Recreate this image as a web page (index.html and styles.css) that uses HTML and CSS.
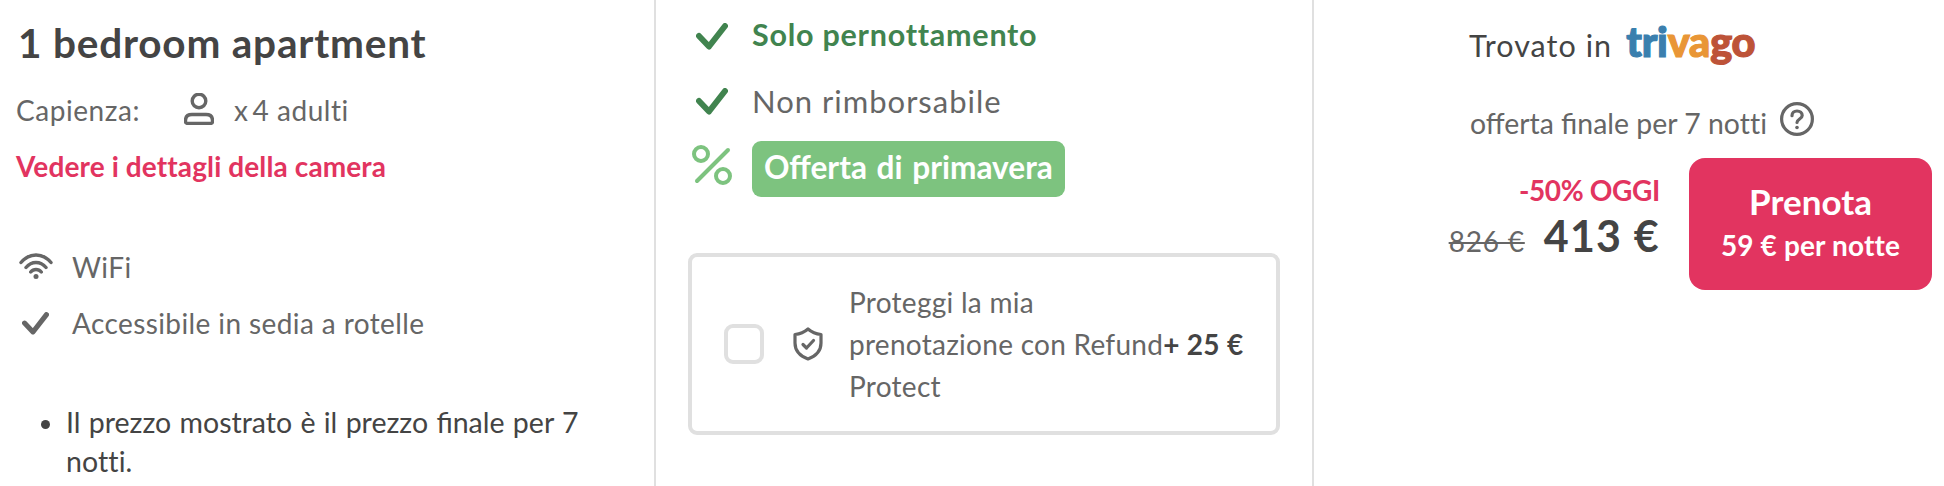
FILE: index.html
```html
<!DOCTYPE html>
<html lang="it">
<head>
<meta charset="utf-8">
<title>1 bedroom apartment</title>
<link rel="stylesheet" href="styles.css">
</head>
<body>
<main class="offer">
  <section class="room">
    <h2 class="room-title">1 bedroom apartment</h2>
    <div class="capacity">
      <span>Capienza:</span>
      <svg class="person" viewBox="0 0 30 32"><circle cx="15" cy="8" r="6.8"/><path d="M1.5 27.500C1.500 23.500 4 21.500 8 21.500H22C26 21.500 28.500 23.500 28.500 27.500V28.500C28.500 29.700 27.800 30.400 26.500 30.400H3.500C2.200 30.400 1.500 29.700 1.500 28.500Z"/></svg>
      <span class="times">x</span><span>4 adulti</span>
    </div>
    <a class="details">Vedere i dettagli della camera</a>
    <div class="amenity wifi-row">
      <svg class="wifi" viewBox="0 0 34 28"><path d="M2 10.500C10.500 .500 23.500 .500 32 10.500M7 15.500C12.500 8.800 21.500 8.800 27 15.500M11.700 20C14.500 16.600 19.500 16.600 22.300 20"/><circle cx="17" cy="24.500" r="2.500"/></svg>
      <span>WiFi</span>
    </div>
    <div class="amenity">
      <svg class="tick grey" viewBox="0 0 32 27"><path d="M3 13L13 23.500L29 3"/></svg>
      <span>Accessibile in sedia a rotelle</span>
    </div>
    <ul class="notes"><li>Il prezzo mostrato è il prezzo finale per 7<br><span class="unjoined">notti.</span></li></ul>
  </section>

  <section class="terms">
    <div class="term"><svg class="tick" viewBox="0 0 32 27"><path d="M3 13L13 23.500L29 3"/></svg><span class="term-strong">Solo pernottamento</span></div>
    <div class="term second"><svg class="tick" viewBox="0 0 32 27"><path d="M3 13L13 23.500L29 3"/></svg><span class="term-plain">Non rimborsabile</span></div>
    <div class="term promo">
      <svg class="percent" viewBox="0 0 40 40"><circle cx="9" cy="9" r="7"/><circle cx="31" cy="31" r="7"/><path d="M36 5L5 36"/></svg>
      <span class="pill">Offerta di primavera</span>
    </div>
    <div class="protect">
      <span class="checkbox"></span>
      <svg class="shield" viewBox="0 0 30 34"><path d="M15 2C11.500 5 6.500 7 2 7.500V16C2 23.500 7 29 15 32C23 29 28 23.500 28 16V7.500C23.500 7 18.500 5 15 2Z"/><path d="M10 17.500L13.500 21L20.500 13.500"/></svg>
      <span class="protect-text">Proteggi la mia<br>prenotazione con Refund<br>Protect</span>
      <strong class="protect-price">+ 25 €</strong>
    </div>
  </section>

  <section class="deal">
    <div class="found"><span class="found-label">Trovato in</span><span class="brand"><span class="brand-blue">tri</span><span class="brand-orange">va</span><span class="brand-red">go</span></span></div>
    <div class="final"><span>offerta finale per 7 <span class="unjoined">notti</span></span><svg class="help" viewBox="0 0 34 34"><circle cx="17" cy="17" r="15.400"/><path d="M12 13.700C12 10.700 14.200 9 17 9C20 9 22.200 10.900 22.200 13.500C22.200 17 17 17 17 20.500"/><circle class="dot" cx="17" cy="25.500" r="1.800"/></svg></div>
    <div class="book">
      <div class="prices">
        <div class="discount">-50% OGGI</div>
        <div class="amounts"><s class="old">826 €</s><strong class="now">413 €</strong></div>
      </div>
      <button class="cta"><span class="cta-main">Prenota</span><span class="cta-sub">59 € per notte</span></button>
    </div>
  </section>
</main>
</body>
</html>
```
FILE: styles.css
```css
* { box-sizing: border-box; }
body { margin: 0; background: #fff; color: #666; font: 28px/40px Lato, "Open Sans", sans-serif; }
svg { display: block; flex: none; fill: none; stroke: currentColor; stroke-linecap: round; stroke-linejoin: round; }
.offer { display: grid; grid-template-columns: 656px 658px 630px; width: 1944px; height: 486px; overflow: hidden; white-space: nowrap; }
.room { padding: 19px 0 0 16px; border-right: 2px solid #e0e0e0; }
.room-title { margin: 0 0 0 2px; color: #444; font-size: 40.5px; line-height: 48px; font-weight: 700; letter-spacing: .8px; }
.capacity { display: flex; align-items: center; margin-top: 23px; letter-spacing: .55px; }
.person { width: 30px; height: 32px; margin-left: 44px; margin-bottom: 2px; stroke-width: 3.4; }
.times { margin-left: 20px; margin-right: 4px; }
.details { display: block; margin-top: 16px; color: #e23460; font-weight: 700; letter-spacing: .12px; }
.amenity { display: flex; align-items: center; gap: 19px; margin-top: 16px; padding-left: 3px; letter-spacing: .4px; }
.wifi-row { margin-top: 61px; }
.wifi { width: 34px; height: 28px; margin-bottom: 2px; stroke-width: 3.4; }
.wifi circle { fill: currentColor; stroke: none; }
.tick { width: 32px; height: 27px; margin: 5px 24px 0 4px; color: #41844f; stroke-width: 6; }
.tick.grey { width: 27px; height: 23px; margin: 0 4px 0 3px; color: #666; }
.notes { margin: 60px 0 0; padding-left: 50px; color: #444; font-size: 28.5px; line-height: 39px; word-spacing: 1px; }
.unjoined { letter-spacing: .1px; }
.terms { padding: 14px 32px 0; border-right: 2px solid #e0e0e0; font-size: 30.5px; }
.term { display: flex; align-items: center; padding-left: 4px; }
.second { margin-top: 27px; }
.second .tick { margin-top: 0; }
.promo { margin-top: 20px; }
.term-strong { color: #41844f; font-weight: 700; letter-spacing: .75px; }
.term-plain { font-size: 31px; letter-spacing: 1px; }
.percent { width: 40px; height: 40px; margin: 0 20px 8px 0; color: #7dc37f; stroke-width: 4; }
.pill { width: 313px; height: 56px; padding: 0 12px; border-radius: 9px; background: #7dc37f; color: #fff; font-size: 31.6px; font-weight: 700; line-height: 52px; word-spacing: 2px; }
.protect { display: flex; align-items: center; width: 592px; height: 182px; margin-top: 56px; padding-left: 32px; border: 4px solid #e0e0e0; border-radius: 9px; font-size: 28px; line-height: 42px; }
.checkbox { width: 40px; height: 40px; border: 4px solid #e0e0e0; border-radius: 9px; }
.shield { width: 30px; height: 34px; margin: 0 26px 0 29px; stroke-width: 3.2; }
.protect-text { letter-spacing: .27px; }
.protect-price { color: #444; font-weight: 700; letter-spacing: .3px; }
.deal { padding: 25px 0 0 156px; }
.found { display: flex; align-items: flex-start; height: 40px; color: #444; font-size: 30.5px; }
.found-label { margin-left: -1px; letter-spacing: 1.05px; }
.brand { margin: -4px 0 0 14px; font-size: 41.5px; font-weight: 900; -webkit-text-stroke: 1.2px currentColor; letter-spacing: -.2px; }
.brand-blue { color: #3a7fae; }
.brand-orange { color: #e99636; }
.brand-red { color: #bd5338; }
.final { display: flex; align-items: center; gap: 13px; height: 40px; margin-top: 38px; font-size: 28.4px; }
.help { width: 34px; height: 34px; margin-bottom: 8px; stroke-width: 3.2; }
.help .dot { fill: currentColor; stroke: none; }
.book { display: flex; justify-content: flex-end; gap: 29px; margin: 15px 12px 0 0; }
.prices { padding-top: 12px; text-align: right; }
.discount { color: #e23460; font-weight: 700; letter-spacing: -.35px; }
.amounts { display: flex; align-items: baseline; justify-content: flex-end; gap: 19px; margin-top: 1px; }
.old { letter-spacing: .8px; text-decoration-thickness: 2px; }
.now { color: #444; font-size: 43px; line-height: 50px; letter-spacing: 1.2px; }
.cta { display: flex; flex: none; flex-direction: column; align-items: center; width: 243px; height: 132px; padding: 23px 0 0; border: 0; border-radius: 16px; background: #e23460; color: #fff; font: 700 28px/40px Lato, sans-serif; }
.cta-main { font-size: 35px; }
.cta-sub { margin-top: 4px; letter-spacing: .15px; }
```
